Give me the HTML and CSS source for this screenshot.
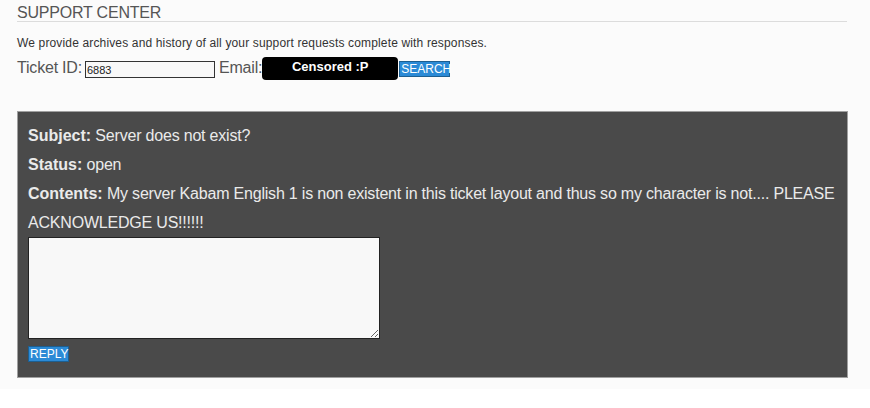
FILE: index.html
```html
<!DOCTYPE html>
<html>
<head>
<meta charset="utf-8">
<link rel="stylesheet" href="styles.css">
</head>
<body>
<div class="page">
  <h1 class="title">SUPPORT CENTER</h1>
  <p class="intro">We provide archives and history of all your support requests complete with responses.</p>
  <div class="lookup">
    <span class="label">Ticket ID:</span>
    <input class="ticket" type="text" value="6883">
    <span class="label email">Email:</span>
    <span class="censor">Censored :P</span>
    <button class="btn search">SEARCH</button>
  </div>
  <div class="ticket-box">
    <div class="line"><b>Subject:</b> Server does not exist?</div>
    <div class="line"><b>Status:</b> open</div>
    <div class="line"><b>Contents:</b> My server Kabam English 1 is non existent in this ticket layout and thus so my character is not.... PLEASE ACKNOWLEDGE US!!!!!!</div>
    <textarea class="reply-text"></textarea>
    <button class="btn reply">REPLY</button>
  </div>
</div>
</body>
</html>
```
FILE: styles.css
```css
html, body {
  margin: 0;
  padding: 0;
  background: #ffffff;
  font-family: "Liberation Sans", Arial, sans-serif;
}
.page {
  background: #fbfbfb;
  padding: 5px 23px 11px 17px;
  width: 830px;
}
.title {
  margin: 0;
  font-size: 16px;
  font-weight: normal;
  color: #555;
  line-height: 16px;
  letter-spacing: -0.2px;
  border-bottom: 1px solid #dcdcdc;
}
.intro {
  margin: 14px 0 0 0;
  font-size: 12px;
  line-height: 14px;
  letter-spacing: 0.15px;
  color: #333;
}
.lookup {
  display: flex;
  align-items: flex-start;
  margin-top: 8px;
  height: 33px;
}
.label {
  font-size: 16px;
  color: #555;
  line-height: 18px;
  margin-top: 1px;
  letter-spacing: -0.2px;
}
.ticket {
  box-sizing: border-box;
  width: 130px;
  height: 17px;
  margin: 3px 4px 0 3px;
  padding: 1px 1px 0 1px;
  border: 1px solid #333;
  background: #f8f8f8;
  font-family: "Liberation Sans", Arial, sans-serif;
  font-size: 11px;
  color: #222;
}
.censor {
  box-sizing: border-box;
  width: 136px;
  height: 23px;
  margin: -1px 0 0 0;
  background: #000;
  color: #fff;
  border-radius: 4px;
  font-weight: bold;
  font-size: 13px;
  text-align: center;
  padding-top: 2px;
}
.btn {
  box-sizing: border-box;
  background: #2b8ad6;
  color: #fff;
  border: 1px solid #1d5f91;
  font-family: "Liberation Sans", Arial, sans-serif;
  font-size: 12px;
  padding: 0 1px;
  line-height: 14px;
  cursor: pointer;
}
.search {
  margin: 3px 0 0 1px;
  height: 16px;
  width: 51px;
}
.ticket-box {
  margin-top: 20px;
  box-sizing: border-box;
  width: 831px;
  background: #4a4a4a;
  border: 1px solid #a0a0a0;
  padding: 9px 6px 15px 10px;
  color: #eaeaea;
  font-size: 16px;
  line-height: 29px;
  letter-spacing: -0.2px;
}
.line b {
  font-weight: bold;
  letter-spacing: 0;
}
.reply-text {
  display: block;
  box-sizing: border-box;
  width: 352px;
  height: 102px;
  margin: 0;
  border: 1px solid #222;
  background: #f8f8f8;
  resize: both;
}
.reply {
  display: block;
  margin-top: 7px;
  height: 16px;
  width: 41px;
  font-size: 12px;
  letter-spacing: 0;
}
```
